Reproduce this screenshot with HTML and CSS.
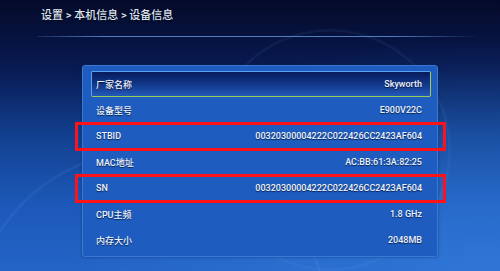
FILE: index.html
```html
<!DOCTYPE html>
<html lang="zh-CN">
<head>
    <meta charset="UTF-8">
    <meta name="viewport" content="width=device-width, initial-scale=1.0">
    <title>设备信息</title>
    <link rel="stylesheet" href="styles.css">
</head>
<body>
    <header class="topbar">
        <h1 class="crumbs">设置 &gt; 本机信息 &gt; 设备信息</h1>
    </header>
    <div class="rule"></div>
    <main class="panel">
        <div class="row focused"><span>厂家名称</span><span>Skyworth</span></div>
        <div class="row"><span>设备型号</span><span>E900V22C</span></div>
        <div class="row marked"><span>STBID</span><span>00320300004222C022426CC2423AF604</span></div>
        <div class="row"><span>MAC地址</span><span>AC:BB:61:3A:82:25</span></div>
        <div class="row marked"><span>SN</span><span>00320300004222C022426CC2423AF604</span></div>
        <div class="row"><span>CPU主频</span><span>1.8 GHz</span></div>
        <div class="row"><span>内存大小</span><span>2048MB</span></div>
    </main>
</body>
</html>
```

FILE: styles.css
```css
html, body {
    height: 100%;
}
body {
    margin: 0;
    overflow: hidden;
    font-family: Roboto, "Noto Sans CJK SC", sans-serif;
    color: #eef2fa;
    background:
        radial-gradient(circle at 150px 330px, transparent 178px, rgba(140, 190, 255, 0.10) 179px, transparent 182px),
        radial-gradient(circle at 330px 150px, transparent 118px, rgba(140, 190, 255, 0.08) 119px, transparent 122px),
        radial-gradient(ellipse at 480px 260px, rgba(60, 140, 235, 0.45), transparent 60%),
        linear-gradient(180deg, #040a28 0%, #081a52 25%, #12408f 50%, #1c58b8 75%, #2464c6 100%);
}
.topbar {
    padding: 9px 0 0 41px;
    height: 27px;
    box-sizing: border-box;
}
.crumbs {
    margin: 0;
    font-size: 11px;
    font-weight: 500;
    line-height: 14px;
    color: #dfe5f0;
    text-shadow: 0 1px 1px rgba(0, 0, 0, 0.6);
}
.rule {
    height: 1px;
    margin: 9px 20px 0 38px;
    background: linear-gradient(90deg, rgba(90, 140, 220, 0.2), rgba(110, 160, 235, 0.75) 15%, rgba(110, 160, 235, 0.75) 80%, rgba(90, 140, 220, 0));
}
.panel {
    width: 356px;
    margin: 28px 0 0 82px;
    padding: 5px 6px 3px 8px;
    box-sizing: border-box;
    background: #1e5dbf;
    border: 1px solid #3a79d3;
    border-radius: 3px;
    box-shadow: 0 0 3px rgba(10, 30, 80, 0.5);
}
.row {
    position: relative;
    display: flex;
    justify-content: space-between;
    align-items: center;
    height: 26px;
    padding: 0 9px 0 5px;
    font-size: 9px;
    font-weight: 500;
    text-shadow: 0 1px 1px rgba(0, 10, 40, 0.7);
}
.focused {
    box-sizing: border-box;
    border: 1.5px solid #5aa2f4;
    border-bottom-color: #9ccc58;
    border-right-color: #a8cf4c;
    border-radius: 2px;
    padding: 0 8px 0 4px;
    background: linear-gradient(180deg, #081a5c 0%, #123a8e 55%, #2358b8 100%);
}
.marked::after {
    content: '';
    position: absolute;
    top: -1px;
    bottom: -2px;
    left: -16px;
    right: -15px;
    border: 3px solid #ff1218;
}
```
